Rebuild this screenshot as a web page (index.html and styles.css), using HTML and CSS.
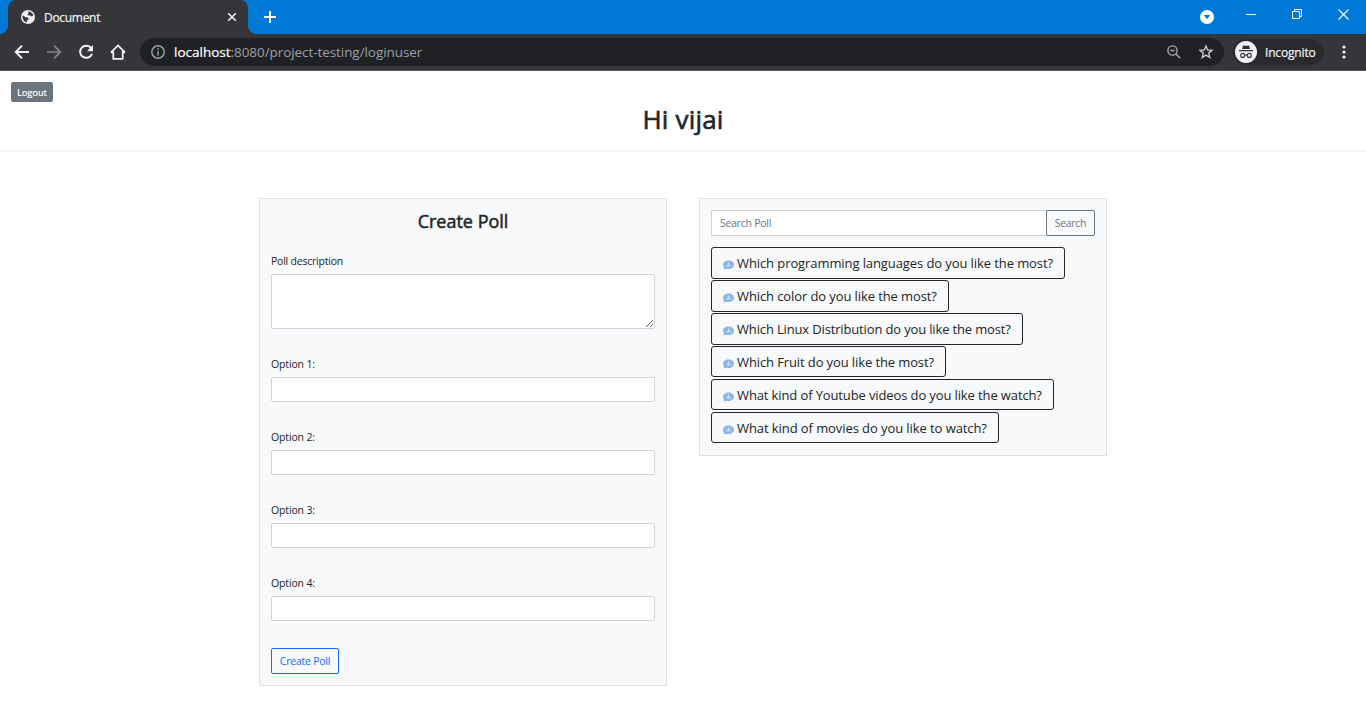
FILE: index.html
```
<!DOCTYPE html>
<html lang="en">
<head>
<meta charset="utf-8">
<title>Document</title>
<link rel="stylesheet" href="styles.css">
</head>
<body>
<header class="tabstrip">
  <div class="tab">
    <svg class="globe" width="14" height="14" viewBox="0 0 14 14"><circle cx="7" cy="7" r="7" fill="#f1f3f4"/><path d="M2 5.2 4.6 7.2 7 7.4 7.6 9.4 5.8 10.6 6 12.4A5.6 5.6 0 0 1 1.5 6.2ZM6.6 1.5C9 1.2 11.4 2.6 12.3 5L10.8 6.6 8.8 5.2 7.2 5.4 6.2 4.4 8 3.2Z" fill="#35363a"/></svg>
    <span class="tab-title">Document</span>
    <svg class="tab-close" width="10" height="10" viewBox="0 0 10 10"><path d="M1.2 1.2 8.8 8.8M8.8 1.2 1.2 8.8" stroke="#f1f3f4" stroke-width="1.6"/></svg>
  </div>
  <svg class="new-tab" width="12" height="12" viewBox="0 0 12 12"><path d="M6 0V12M0 6H12" stroke="#fff" stroke-width="2"/></svg>
  <div class="window-controls">
    <svg width="14" height="14" viewBox="0 0 14 14"><circle cx="7" cy="7" r="7" fill="#fff"/><path d="M3.8 5H10.2L7 9.2Z" fill="#0078d7"/></svg>
    <svg width="10" height="10" viewBox="0 0 10 10"><path d="M0 5.5H10" stroke="#fff"/></svg>
    <svg width="10" height="10" viewBox="0 0 10 10"><path d="M.5 2.5H7.5V9.5H.5ZM2.5 2.5V.5H9.5V7.5H7.5" fill="none" stroke="#fff"/></svg>
    <svg width="11" height="11" viewBox="0 0 11 11"><path d="M.5.5 10.5 10.5M10.5.5.5 10.5" stroke="#fff" stroke-width="1.1"/></svg>
  </div>
</header>
<nav class="toolbar">
  <svg width="16" height="16" viewBox="0 0 16 16"><path d="M15 8H2M8 1.7 1.7 8 8 14.3" fill="none" stroke="#f1f3f4" stroke-width="1.9"/></svg>
  <svg width="16" height="16" viewBox="0 0 16 16"><path d="M1 8H14M8 1.7 14.3 8 8 14.3" fill="none" stroke="#86878a" stroke-width="1.7"/></svg>
  <svg width="16" height="16" viewBox="0 0 16 16"><path d="M13.2 4.2A6.1 6.1 0 1 0 14 9.7" fill="none" stroke="#f1f3f4" stroke-width="2"/><path d="M15 1V7.2H8.8Z" fill="#f1f3f4"/></svg>
  <svg width="16" height="16" viewBox="0 0 16 16"><path d="M1 8.4 8 1.4 15 8.4M3.3 7.2V14.8H12.7V7.2M1 8.4H4M12 8.4H15" fill="none" stroke="#f1f3f4" stroke-width="1.8"/></svg>
  <div class="omnibox">
    <svg width="14" height="14" viewBox="0 0 14 14"><circle cx="7" cy="7" r="6.2" fill="none" stroke="#9aa0a6" stroke-width="1.5"/><path d="M7 6V10.5M7 3.2V4.8" stroke="#9aa0a6" stroke-width="1.5"/></svg>
    <span class="url"><b>localhost</b><span class="path">:8080/project-testing/loginuser</span></span>
    <svg class="lens" width="14" height="14" viewBox="0 0 14 14"><circle cx="5.5" cy="5.5" r="4.6" fill="none" stroke="#a5a8ac" stroke-width="1.4"/><path d="M3.4 5.5H7.6M9 9 13.2 13.2" stroke="#a5a8ac" stroke-width="1.5"/></svg>
    <svg class="star" width="16" height="16" viewBox="0 0 16 16"><path d="M8 2 9.7 6 14 6.3 10.7 9.1 11.8 13.4 8 11.1 4.2 13.4 5.3 9.1 2 6.3 6.3 6Z" fill="none" stroke="#c4c7ca" stroke-width="1.4"/></svg>
  </div>
  <div class="profile">
    <svg width="22" height="22" viewBox="0 0 22 22"><circle cx="11" cy="11" r="11" fill="#f1f3f4"/><path d="M7 8 8.2 4.2Q11 5.3 13.8 4.2L15 8ZM4 9H18V10.3H4Z" fill="#303134"/><g fill="none" stroke="#303134" stroke-width="1.1"><circle cx="7.7" cy="14.4" r="2"/><circle cx="14.3" cy="14.4" r="2"/><path d="M9.7 14.2Q11 13.4 12.3 14.2"/></g></svg>
    <span class="profile-name">Incognito</span>
  </div>
  <svg class="dots" width="4" height="14" viewBox="0 0 4 14"><g fill="#f1f3f4"><circle cx="2" cy="2" r="1.6"/><circle cx="2" cy="7" r="1.6"/><circle cx="2" cy="12" r="1.6"/></g></svg>
</nav>
<section class="greeting">
  <button class="logout">Logout</button>
  <h1>Hi vijai</h1>
</section>
<main class="content">
  <form class="card create">
    <h2>Create Poll</h2>
    <div class="field"><label class="desc">Poll description</label><textarea></textarea></div>
    <div class="field"><label>Option 1:</label><input type="text"></div>
    <div class="field"><label>Option 2:</label><input type="text"></div>
    <div class="field"><label>Option 3:</label><input type="text"></div>
    <div class="field"><label>Option 4:</label><input type="text"></div>
    <button type="button" class="submit">Create Poll</button>
  </form>
  <section class="card polls">
    <div class="search"><div class="search-input">Search Poll</div><button class="search-button">Search</button></div>
    <div class="poll-list">
      <button class="poll"><svg class="bubble"><use href="#chat"/></svg><span>Which programming languages do you like the most?</span></button>
      <button class="poll"><svg class="bubble"><use href="#chat"/></svg><span>Which color do you like the most?</span></button>
      <button class="poll"><svg class="bubble"><use href="#chat"/></svg><span>Which Linux Distribution do you like the most?</span></button>
      <button class="poll"><svg class="bubble"><use href="#chat"/></svg><span>Which Fruit do you like the most?</span></button>
      <button class="poll"><svg class="bubble"><use href="#chat"/></svg><span>What kind of Youtube videos do you like the watch?</span></button>
      <button class="poll"><svg class="bubble"><use href="#chat"/></svg><span>What kind of movies do you like to watch?</span></button>
    </div>
  </section>
</main>
<svg class="sprite" width="0" height="0"><symbol id="chat" viewBox="0 0 11 10"><path d="M5.6.5C8.8.5 11 2.3 11 4.8S8.8 9 5.6 9Q4.4 9 3.4 8.8L.5 9.4 1.1 7.4Q0 6.2 0 4.8C0 2.3 2.4.5 5.6.5Z" fill="#8ab6ec"/><path d="M5.5 2.6V6.2M3.6 5.6H7.6" fill="none" stroke="#d5e5fa" stroke-width="1.3"/></symbol></svg>
</body>
</html>
```
FILE: styles.css
```
* { box-sizing: border-box; }
body { margin: 0; height: 727px; overflow: hidden; background: #fff; color: #212529; font-family: "Open Sans", "Noto Sans", sans-serif; font-size: 11px; }
svg { display: block; flex: none; }
button { font-family: inherit; margin: 0; padding: 0; background: transparent; white-space: nowrap; }
span, label { white-space: nowrap; }
.sprite { position: absolute; }

.tabstrip { height: 34px; background: #0078d7; display: flex; padding-left: 8px; }
.tab { position: relative; width: 240px; height: 34px; background: #35363a; border-radius: 8px 8px 0 0; display: flex; align-items: center; padding: 0 11px 0 13px; }
.tab::before, .tab::after { content: ""; position: absolute; bottom: 0; width: 8px; height: 8px; }
.tab::before { left: -8px; background: radial-gradient(circle at 0 0, transparent 7.5px, #35363a 8px); }
.tab::after { right: -8px; background: radial-gradient(circle at 100% 0, transparent 7.5px, #35363a 8px); }
.tab-title { color: #f1f3f4; font-size: 12px; letter-spacing: -0.3px; margin-left: 9px; flex: 1; -webkit-text-stroke: 0.2px; }
.new-tab { margin: 11px 0 0 16px; }
.window-controls { margin-left: auto; display: grid; grid-template-columns: 42px 46px 46px 46px; height: 28px; align-items: center; justify-items: center; }
.window-controls svg:first-child { margin-top: 6px; }

.toolbar { height: 37px; background: #35363a; border-bottom: 1px solid #55545b; display: flex; align-items: center; gap: 16px; padding-left: 14px; }
.omnibox { width: 1084px; height: 28px; background: #202124; border-radius: 14px; margin-left: -2px; display: flex; align-items: center; padding: 0 10px 0 11px; }
.url { font-size: 13.5px; margin-left: 9px; color: #fff; }
.url b { font-weight: 400; -webkit-text-stroke: 0.2px; }
.path { color: #9aa0a6; letter-spacing: -0.07px; }
.lens { margin-left: auto; }
.star { margin-left: 17px; }
.profile { width: 91px; height: 26px; margin-left: -7px; background: #292a2d; border-radius: 13px; display: flex; align-items: center; gap: 8px; padding-left: 2px; }
.profile-name { color: #f1f3f4; font-size: 12px; letter-spacing: -0.17px; -webkit-text-stroke: 0.2px; }
.dots { margin-left: 2px; }

.greeting { height: 80px; padding: 11px 11px 0; border-bottom: 1px solid #f1f1f1; box-shadow: 0 1px 1px #f8f8f8; }
.logout { display: block; width: 42px; height: 20px; border: 0; border-radius: 2px; background: #6c757d; color: #fff; font-size: 9px; line-height: 19px; letter-spacing: 0.08px; -webkit-text-stroke: 0.2px; }
h1 { margin: 0; font-size: 26px; font-weight: 400; line-height: 34px; text-align: center; letter-spacing: 0.2px; -webkit-text-stroke: 0.6px; }

.content { display: flex; align-items: flex-start; justify-content: center; gap: 32px; padding-top: 47px; }
.card { width: 408px; background: #f8f9fa; border: 1px solid #dee2e6; padding: 11px; }
.create { height: 488px; }
h2 { margin: 0 0 21px; font-size: 18px; font-weight: 400; line-height: 23px; text-align: center; -webkit-text-stroke: 0.5px; }
.field { margin-bottom: 28px; }
.field:last-of-type { margin-bottom: 27px; }
label { display: block; height: 20px; font-size: 10.5px; line-height: 15px; letter-spacing: -0.14px; }
.desc { letter-spacing: -0.22px; }
textarea, input { display: block; width: 384px; border: 1px solid #ced4da; border-radius: 2px; background: #fff; margin: 0; }
textarea { height: 55px; }
input { height: 25px; }
.submit { width: 68px; height: 26px; border: 1px solid #0d6efd; border-radius: 2px; color: #0d6efd; font-size: 10.5px; letter-spacing: -0.23px; }

.polls { height: 258px; }
.search { display: flex; height: 26px; font-size: 10.5px; color: #6c757d; letter-spacing: -0.26px; }
.search-input { width: 336px; border: 1px solid #ced4da; border-radius: 2px 0 0 2px; border-right: 0; background: #fff; padding-left: 8px; line-height: 24px; }
.search-button { width: 49px; margin-left: -1px; border: 1px solid #6c757d; border-radius: 2px; font-size: 10.5px; letter-spacing: -0.3px; color: #6c757d; background: #f8f9fa; }
.poll-list { margin-top: 11px; display: flex; flex-direction: column; align-items: flex-start; gap: 1px; }
.poll { height: 32px; border: 1px solid #212529; border-radius: 3px; display: flex; align-items: center; padding: 0 11px; color: #212529; font-size: 13px; letter-spacing: -0.1px; }
.poll:nth-child(n+4) { height: 31px; margin-bottom: 1px; }
.poll:nth-child(1) { width: 354px; letter-spacing: -0.09px; }
.poll:nth-child(2) { width: 238px; }
.poll:nth-child(3) { width: 312px; letter-spacing: -0.15px; }
.poll:nth-child(4) { width: 235px; letter-spacing: -0.11px; }
.poll:nth-child(5) { width: 343px; letter-spacing: -0.12px; }
.poll:nth-child(6) { width: 288px; letter-spacing: -0.08px; }
.bubble { width: 11px; height: 10px; margin: 4px 3px 0 0; }
```
